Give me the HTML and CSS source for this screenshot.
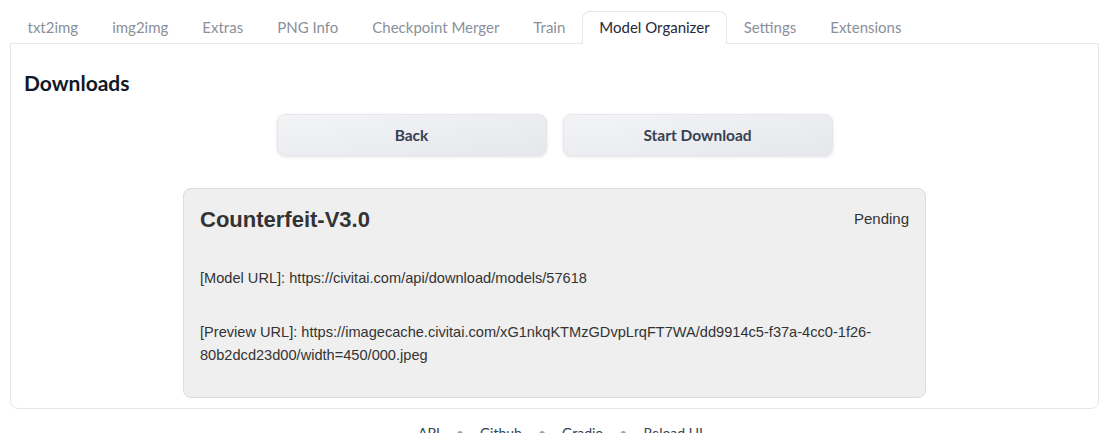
FILE: index.html
```html
<!DOCTYPE html>
<html>
<head>
<meta charset="utf-8">
<link rel="stylesheet" href="styles.css">
</head>
<body>
<div class="app">
  <nav class="tabs">
    <span class="tab">txt2img</span>
    <span class="tab">img2img</span>
    <span class="tab">Extras</span>
    <span class="tab">PNG Info</span>
    <span class="tab">Checkpoint Merger</span>
    <span class="tab">Train</span>
    <span class="tab active">Model Organizer</span>
    <span class="tab">Settings</span>
    <span class="tab">Extensions</span>
  </nav>
  <section class="panel">
    <h2 class="heading">Downloads</h2>
    <div class="actions">
      <button class="btn">Back</button>
      <button class="btn">Start Download</button>
    </div>
    <div class="card">
      <div class="card-head">
        <h3 class="card-title">Counterfeit-V3.0</h3>
        <span class="status">Pending</span>
      </div>
      <p class="line first">[Model URL]: https://civitai.com/api/download/models/57618</p>
      <p class="line">[Preview URL]: https://imagecache.civitai.com/xG1nkqKTMzGDvpLrqFT7WA/dd9914c5-f37a-4cc0-1f26-80b2dcd23d00/width=450/000.jpeg</p>
    </div>
  </section>
  <footer class="footer">
    <span>API</span><span class="dot">•</span><span>Github</span><span class="dot">•</span><span>Gradio</span><span class="dot">•</span><span>Reload UI</span>
  </footer>
</div>
</body>
</html>
```
FILE: styles.css
```css
* { box-sizing: border-box; }
html, body { margin: 0; padding: 0; background: #fff; overflow: hidden; }
body { font-family: "Lato", "Noto Sans", sans-serif; color: #1f2937; }
.app { padding: 11px 11px 0 10px; }
.tabs { display: flex; height: 32px; position: relative; z-index: 1; }
.tab {
  padding: 0 16px;
  line-height: 31px;
  font-size: 15px;
  color: #8a909b;
  border: 1px solid transparent;
  border-bottom: none;
  border-radius: 8px 8px 0 0;
  white-space: nowrap;
}
.tab:first-child { padding-left: 16.5px; }
.active {
  color: #1f2937;
  background: #fff;
  border-color: #e5e7eb;
  height: 33px;
}
.panel {
  border: 1px solid #e5e7eb;
  border-radius: 0 0 8px 8px;
  height: 366px;
  padding: 24px 12px 0 12px;
}
.heading {
  margin: 0 0 0 1px;
  font-size: 21px;
  font-weight: 700;
  color: #111827;
  line-height: 30px;
}
.actions {
  display: flex;
  justify-content: center;
  gap: 16px;
  margin-top: 16px;
}
.btn {
  width: 270px;
  height: 42px;
  border: 1px solid #e5e7eb;
  border-radius: 8px;
  background: linear-gradient(to bottom right, #f3f4f6, #e5e7eb);
  box-shadow: 0 1px 3px rgba(0,0,0,0.12);
  font-family: "Lato", "Noto Sans", sans-serif;
  font-size: 15.5px;
  font-weight: 700;
  color: #374151;
  padding-bottom: 2px;
}
.card {
  width: 743px;
  margin: 32px auto 0;
  background: #efefef;
  border: 1px solid #dcdcdc;
  border-radius: 8px;
  padding: 16px 16px 20px 16px;
  font-family: "Liberation Sans", Arial, sans-serif;
  color: #333;
  height: 210px;
}
.card-head { display: flex; justify-content: space-between; align-items: flex-start; }
.card-title { margin: 0; font-size: 22px; font-weight: 700; line-height: 30px; color: #333; }
.status { font-size: 15px; line-height: 28px; }
.line { margin: 31px 0 0; font-size: 14.6px; line-height: 23px; }
.line.first { margin-top: 32px; }
.footer {
  display: flex;
  justify-content: center;
  gap: 16px;
  margin-top: 15px;
  font-size: 14px;
  color: #374151;
  padding-left: 12px;
}
.dot { color: #9ca3af; }
```
